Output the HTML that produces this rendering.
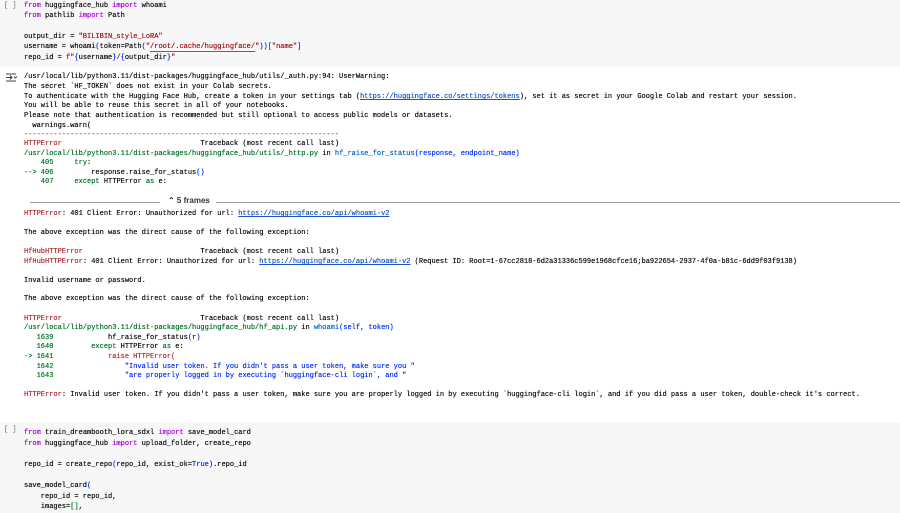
<!DOCTYPE html>
<html><head><meta charset="utf-8"><style>
body{margin:0;width:900px;height:513px;background:#fff;position:relative;overflow:hidden;font-family:"Liberation Mono",monospace;font-size:7px;color:#111}
.l{position:absolute;left:24px;white-space:pre;line-height:10px;height:10px;text-shadow:0 0 0.4px currentColor}
.cell{position:absolute;left:0;width:900px;background:#f7f7f7}
.k{color:#af00db}.s{color:#a31515}.b{color:#0431fa}.r{color:#b22b31}.g{color:#007427}.f{color:#0065ca}
a{color:#1a55c8;text-decoration:underline}
.br{position:absolute;left:4px;color:#616161;font-size:7px;white-space:pre}
.sq{border-bottom:1px solid #d33}
</style></head><body>
<div class="cell" style="top:0;height:67px"></div>
<div class="cell" style="top:422px;height:91px"></div>
<div class="br" style="top:2px">[ ]</div>
<div class="br" style="top:426px">[ ]</div>
<svg style="position:absolute;left:5px;top:73px" width="12" height="9" viewBox="0 0 12 9"><path d="M1 1h10M1 8h10M1 4.5h6M5 2.5l2 2-2 2M9 3.5l1.5 1.5 1.5-1.5" stroke="#444" stroke-width="1" fill="none"/></svg>

<div class="l" style="top:1px"><span class="k">from</span> huggingface_hub <span class="k">import</span> whoami</div>
<div class="l" style="top:11px"><span class="k">from</span> pathlib <span class="k">import</span> Path</div>
<div class="l" style="top:32px">output_dir = <span class="s">"BILIBIN_style_LoRA"</span></div>
<div class="l" style="top:42px">username = whoami<span class="b">(</span>token=Path<span class="b">(</span><span class="s">"<span class="sq">/root/.cache/huggingface/</span>"</span><span class="b">))[</span><span class="s">"name"</span><span class="b">]</span></div>
<div class="l" style="top:53px">repo_id = <span class="s">f"</span><span class="b">{</span>username<span class="b">}</span><span class="s">/</span><span class="b">{</span>output_dir<span class="b">}</span><span class="s">"</span></div>

<div class="l" style="top:72px">/usr/local/lib/python3.11/dist-packages/huggingface_hub/utils/_auth.py:94: UserWarning:</div>
<div class="l" style="top:82px">The secret `HF_TOKEN` does not exist in your Colab secrets.</div>
<div class="l" style="top:92px">To authenticate with the Hugging Face Hub, create a token in your settings tab (<a>https://huggingface.co/settings/tokens</a>), set it as secret in your Google Colab and restart your session.</div>
<div class="l" style="top:101px">You will be able to reuse this secret in all of your notebooks.</div>
<div class="l" style="top:111px">Please note that authentication is recommended but still optional to access public models or datasets.</div>
<div class="l" style="top:121px">  warnings.warn(</div>
<div class="l r" style="top:130px">---------------------------------------------------------------------------</div>
<div class="l" style="top:139px"><span class="r">HTTPError</span>                                 Traceback (most recent call last)</div>
<div class="l" style="top:149px"><span class="g">/usr/local/lib/python3.11/dist-packages/huggingface_hub/utils/_http.py</span> in <span class="f">hf_raise_for_status</span><span class="b">(response, endpoint_name)</span></div>
<div class="l" style="top:158px"><span class="g">    405 </span>    <span class="g">try</span>:</div>
<div class="l" style="top:168px"><span class="g">--&gt; 406 </span>        response.raise_for_status<span class="b">()</span></div>
<div class="l" style="top:177px"><span class="g">    407 </span>    <span class="g">except</span> HTTPError <span class="g">as</span> e:</div>

<div style="position:absolute;left:30px;top:202px;width:130px;height:1px;background:#9e9e9e"></div>
<div style="position:absolute;left:168px;top:196px;font:bold 8px 'Liberation Sans',sans-serif;color:#333;white-space:pre">⌃ 5 frames</div>
<div style="position:absolute;left:216px;top:202px;width:684px;height:1px;background:#9e9e9e"></div>

<div class="l" style="top:209px"><span class="r">HTTPError</span>: 401 Client Error: Unauthorized for url: <a>https://huggingface.co/api/whoami-v2</a></div>
<div class="l" style="top:228px">The above exception was the direct cause of the following exception:</div>
<div class="l" style="top:247px"><span class="r">HfHubHTTPError</span>                            Traceback (most recent call last)</div>
<div class="l" style="top:257px"><span class="r">HfHubHTTPError</span>: 401 Client Error: Unauthorized for url: <a>https://huggingface.co/api/whoami-v2</a> (Request ID: Root=1-67cc2818-6d2a31336c599e1968cfce16;ba922654-2937-4f0a-b81c-6dd9f03f9138)</div>
<div class="l" style="top:276px">Invalid username or password.</div>
<div class="l" style="top:294px">The above exception was the direct cause of the following exception:</div>
<div class="l" style="top:314px"><span class="r">HTTPError</span>                                 Traceback (most recent call last)</div>
<div class="l" style="top:323px"><span class="g">/usr/local/lib/python3.11/dist-packages/huggingface_hub/hf_api.py</span> in <span class="f">whoami</span><span class="b">(self, token)</span></div>
<div class="l" style="top:333px"><span class="g">   1639 </span>            hf_raise_for_status<span class="b">(</span>r<span class="b">)</span></div>
<div class="l" style="top:342px"><span class="g">   1640 </span>        <span class="g">except</span> HTTPError <span class="g">as</span> e:</div>
<div class="l" style="top:352px"><span class="g">-&gt; 1641 </span>            <span class="r">raise</span> <span class="r">HTTPError(</span></div>
<div class="l" style="top:362px"><span class="g">   1642 </span>                <span class="b">"Invalid user token. If you didn't pass a user token, make sure you "</span></div>
<div class="l" style="top:371px"><span class="g">   1643 </span>                <span class="b">"are properly logged in by executing `huggingface-cli login`, and "</span></div>
<div class="l" style="top:390px"><span class="r">HTTPError</span>: Invalid user token. If you didn't pass a user token, make sure you are properly logged in by executing `huggingface-cli login`, and if you did pass a user token, double-check it's correct.</div>

<div class="l" style="top:428px"><span class="k">from</span> train_dreambooth_lora_sdxl <span class="k">import</span> save_model_card</div>
<div class="l" style="top:439px"><span class="k">from</span> huggingface_hub <span class="k">import</span> upload_folder, create_repo</div>
<div class="l" style="top:460px">repo_id = create_repo<span class="b">(</span>repo_id, exist_ok=<span class="b">True</span><span class="b">)</span>.repo_id</div>
<div class="l" style="top:481px">save_model_card<span class="b">(</span></div>
<div class="l" style="top:492px">    repo_id = repo_id,</div>
<div class="l" style="top:502px">    images=<span class="g">[]</span>,</div>
</body></html>
